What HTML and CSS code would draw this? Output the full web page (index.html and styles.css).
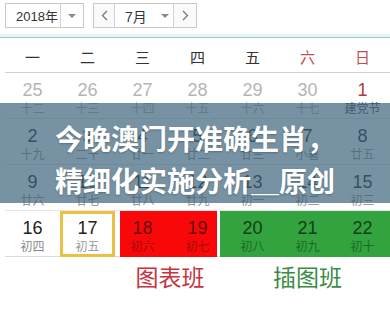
FILE: index.html
```html
<!DOCTYPE html>
<html lang="zh-CN">
<head>
<meta charset="utf-8">
<title>万年历 2018年7月</title>
<link rel="stylesheet" href="styles.css">
</head>
<body>
<div class="page">
  <div class="toolbar">
    <div class="select select-year">
      <span class="val">2018年</span>
      <span class="caret-box"><i class="caret"></i></span>
    </div>
    <div class="select select-month">
      <span class="nav nav-prev"><svg width="7" height="11" viewBox="0 0 7 11"><polyline points="6,1 1.5,5.5 6,10" fill="none" stroke="#777" stroke-width="1.3"/></svg></span>
      <span class="val">7月</span>
      <span class="caret-inline"><i class="caret"></i></span>
      <span class="nav nav-next"><svg width="7" height="11" viewBox="0 0 7 11"><polyline points="1,1 5.5,5.5 1,10" fill="none" stroke="#777" stroke-width="1.3"/></svg></span>
    </div>
  </div>
  <div class="rule"></div>

  <div class="cal">
    <div class="week">
      <span>一</span><span>二</span><span>三</span><span>四</span><span>五</span><span class="wkend">六</span><span class="wkend">日</span>
    </div>

    <div class="row">
      <div class="cell other"><b>25</b><small>十二</small></div>
      <div class="cell other"><b>26</b><small>十三</small></div>
      <div class="cell other"><b>27</b><small>十四</small></div>
      <div class="cell other"><b>28</b><small>十五</small></div>
      <div class="cell other"><b>29</b><small>十六</small></div>
      <div class="cell other"><b>30</b><small>十七</small></div>
      <div class="cell holiday"><b>1</b><small>建党节</small></div>
    </div>

    <div class="row">
      <div class="cell"><b>2</b><small>十九</small></div>
      <div class="cell"><b>3</b><small>二十</small></div>
      <div class="cell"><b>4</b><small>廿一</small></div>
      <div class="cell"><b>5</b><small>廿二</small></div>
      <div class="cell"><b>6</b><small>廿三</small></div>
      <div class="cell"><b>7</b><small>小暑</small></div>
      <div class="cell"><b>8</b><small>廿五</small></div>
    </div>

    <div class="row">
      <div class="cell"><b>9</b><small>廿六</small></div>
      <div class="cell"><b>10</b><small>廿七</small></div>
      <div class="cell"><b>11</b><small>廿八</small></div>
      <div class="cell"><b>12</b><small>廿九</small></div>
      <div class="cell"><b>13</b><small>初一</small></div>
      <div class="cell"><b>14</b><small>初二</small></div>
      <div class="cell"><b>15</b><small>初三</small></div>
    </div>

    <div class="row row-mark">
      <div class="mark mark-red"></div>
      <div class="mark mark-green"></div>
      <div class="cell c1"><b>16</b><small>初四</small></div>
      <div class="cell c2 today"><b>17</b><small>初五</small></div>
      <div class="cell c3 on-red"><b>18</b><small>初六</small></div>
      <div class="cell c4 on-red"><b>19</b><small>初七</small></div>
      <div class="cell c5 on-green"><b>20</b><small>初八</small></div>
      <div class="cell c6 on-green"><b>21</b><small>初九</small></div>
      <div class="cell c7 on-green"><b>22</b><small>初十</small></div>
    </div>

    <div class="legend">
      <span class="tag tag-red">图表班</span>
      <span class="tag tag-green">插图班</span>
    </div>

    <div class="banner">
      <p>今晚澳门开准确生肖，</p>
      <p>精细化实施分析＿原创</p>
    </div>
  </div>
</div>
</body>
</html>
```

FILE: styles.css
```css
html, body {
  margin: 0;
  padding: 0;
  background: #fff;
}

.page {
  width: 390px;
  height: 309px;
  overflow: hidden;
  font-family: "Liberation Sans", "Noto Sans CJK SC", sans-serif;
  color: #333;
}

/* year / month pickers */
.toolbar {
  display: flex;
  gap: 9px;
  padding: 3px 0 0 5px;
  height: 34px;
  box-sizing: border-box;
}

.select {
  display: flex;
  align-items: stretch;
  height: 25px;
  box-sizing: border-box;
  border: 1px solid #c9c9c9;
  background: #fff;
  font-size: 13px;
  white-space: nowrap;
}

.select .val {
  display: flex;
  align-items: center;
}

.select-year { width: 79px; }
.select-year .val {
  width: 55px;
  padding-left: 10px;
  box-sizing: border-box;
  border-right: 1px solid #d4d4d4;
}
.select-year .caret-box {
  flex: 1;
  display: flex;
  align-items: center;
  justify-content: center;
}

.select-month { width: 104px; }
.select-month .nav {
  display: flex;
  align-items: center;
  justify-content: center;
  background: #fafafa;
}
.select-month .nav-prev { width: 20px; border-right: 1px solid #d4d4d4; }
.select-month .nav-next { width: 22px; border-left: 1px solid #d4d4d4; }
.select-month .val {
  padding-left: 10px;
  width: 36px;
  font-size: 14px;
}
.select-month .caret-inline {
  flex: 1;
  display: flex;
  align-items: center;
}

.caret {
  display: block;
  width: 0;
  height: 0;
  border-left: 4px solid transparent;
  border-right: 4px solid transparent;
  border-top: 4px solid #8a8a8a;
}

.rule {
  height: 4px;
  background: #e4f5f6;
  border-bottom: 1px solid #a9c3c6;
  margin-bottom: 2px;
  box-sizing: border-box;
}

/* calendar grid */
.cal {
  position: relative;
  padding-left: 5px;
}

.week,
.row,
.legend {
  display: grid;
  grid-template-columns: repeat(7, 55px);
}

.week {
  height: 33px;
  border-bottom: 1px solid #cfcfcf;
  box-sizing: border-box;
}
.week span {
  text-align: center;
  line-height: 33px;
  font-size: 15px;
  font-family: "Noto Sans CJK SC", sans-serif;
  color: #333;
}
.week .wkend { color: #c44a4f; }

.row {
  height: 46px;
  border-bottom: 1px solid #e6e6e6;
  box-sizing: border-box;
}

.cell {
  display: flex;
  flex-direction: column;
  align-items: center;
  padding-top: 7px;
  box-sizing: border-box;
}
.cell b {
  font-weight: normal;
  font-size: 18px;
  line-height: 20px;
  color: #333;
}
.cell small {
  font-family: "Noto Sans CJK SC", sans-serif;
  font-size: 12px;
  line-height: 16px;
  color: #999;
}

.cell.other b { color: #b5b5b5; }
.cell.other small { color: #b5b5b5; }
.cell.holiday b { color: #b8373e; }
.cell.holiday small { color: #555; }

/* last week: highlighted spans sit in the same grid row as the day cells */
.row-mark { border-bottom-color: #dcdcdc; }
.row-mark > * { grid-row: 1; }
.row-mark .c1 { grid-column: 1; }
.row-mark .c2 { grid-column: 2; }
.row-mark .c3 { grid-column: 3; }
.row-mark .c4 { grid-column: 4; }
.row-mark .c5 { grid-column: 5; }
.row-mark .c6 { grid-column: 6; }
.row-mark .c7 { grid-column: 7; }

.mark-red {
  grid-column: 3 / 5;
  margin: 0 8px -1px 5px;
  background: #f80808;
}
.mark-green {
  grid-column: 5 / 8;
  margin: 0 0 -1px -5px;
  background: #32a33f;
}

.cell.today {
  border: 3px solid #ecbf45;
  padding-top: 4px;
  margin-bottom: -1px;
}
.cell.today b { color: #222; }

.cell.c1 b { color: #222; }
.cell.c1 small { color: #888; }

.cell.on-red b { color: #6a0d0d; }
.cell.on-red small { color: #a60a0a; }
.cell.on-green b { color: #153d18; }
.cell.on-green small { color: #1d6a26; }

.legend {
  padding-top: 4px;
}
.tag {
  font-family: "Noto Sans CJK SC", sans-serif;
  font-size: 23px;
  line-height: 30px;
  text-align: center;
}
.tag-red {
  grid-column: 3 / 5;
  color: #c8323f;
}
.tag-green {
  grid-column: 5 / 8;
  color: #3b8b44;
}

/* headline band laid over the middle weeks */
.banner {
  position: absolute;
  left: 0;
  top: 63px;
  width: 390px;
  height: 100px;
  background: rgba(55, 95, 120, 0.68);
  display: flex;
  flex-direction: column;
  align-items: center;
  justify-content: center;
  padding-top: 12px;
  box-sizing: border-box;
}
.banner p {
  margin: 0;
  font-family: "Noto Sans CJK SC", sans-serif;
  font-weight: 700;
  font-size: 28px;
  line-height: 42px;
  color: #fff;
  text-shadow: 0 1px 2px rgba(0, 0, 0, 0.25);
  white-space: nowrap;
}
```
